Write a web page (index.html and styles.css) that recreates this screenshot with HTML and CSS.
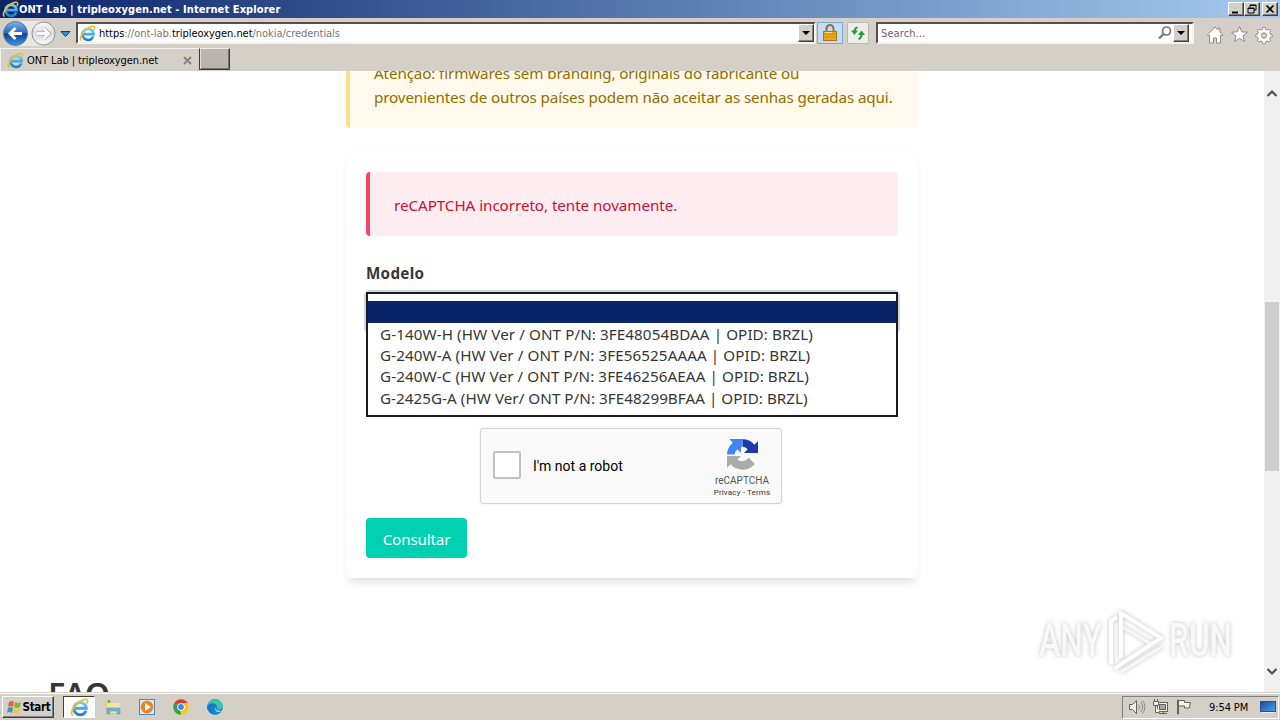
FILE: index.html
```html
<!DOCTYPE html>
<html lang="pt-BR">
<head>
<meta charset="utf-8">
<title>ONT Lab | tripleoxygen.net</title>
<link rel="stylesheet" href="styles.css">
</head>
<body>
<svg class="defs" width="0" height="0">
  <defs>
    <linearGradient id="ieblue" x1="0" y1="0" x2="0" y2="1"><stop offset="0" stop-color="#6fd0fa"/><stop offset="1" stop-color="#1583d0"/></linearGradient>
    <linearGradient id="back" x1="0" y1="0" x2="0" y2="1"><stop offset="0" stop-color="#7fb2e8"/><stop offset=".48" stop-color="#2a68bc"/><stop offset=".52" stop-color="#0c3f94"/><stop offset="1" stop-color="#3c9be8"/></linearGradient>
    <linearGradient id="fwd" x1="0" y1="0" x2="0" y2="1"><stop offset="0" stop-color="#fafafa"/><stop offset=".5" stop-color="#dcdde0"/><stop offset="1" stop-color="#f6f8fa"/></linearGradient>
    <linearGradient id="screen" x1="0" y1="0" x2="1" y2="1"><stop offset="0" stop-color="#184a9c"/><stop offset="1" stop-color="#4aa0f0"/></linearGradient>
    <symbol id="ie" viewBox="0 0 16 16">
      <path d="M13.400 10.700A5.200 5.200 0 1 1 13.700 8.600H4.600" fill="none" stroke="url(#ieblue)" stroke-width="2.500"/>
      <path d="M2.400 14.600C-.3 13.300 2.300 8 6.200 4.400 9.700 1.300 14.300 0 14.700 2.300 14.900 3 14.500 4 14.100 4.800" fill="none" stroke="#f3bd22" stroke-width="1.500"/>
    </symbol>
  </defs>
</svg>
<div class="desktop">
  <header class="titlebar">
    <svg class="ie16"><use href="#ie"/></svg>
    <span class="title">ONT Lab | tripleoxygen.net - Internet Explorer</span>
    <div class="winbtns">
      <span class="btn3d"><svg width="14" height="12"><path d="M3 9.500h6" stroke="#000" stroke-width="2"/></svg></span>
      <span class="btn3d"><svg width="14" height="12"><path d="M5 4.500V2h6v5H9M5 2.500h6M3 5h6v5H3zM3 5.500h6" fill="none" stroke="#000"/></svg></span>
      <span class="btn3d close"><svg width="14" height="12"><path d="M3.500 2.500l7 7M10.500 2.500l-7 7" stroke="#000" stroke-width="1.700"/></svg></span>
    </div>
  </header>

  <div class="toolbar">
    <svg class="nav" width="76" height="30">
      <path d="M16 3h27v25H16z" fill="#e9e8e5"/>
      <circle cx="43.500" cy="15.500" r="11.500" fill="url(#fwd)" stroke="#8d9196"/>
      <path d="M37 15.500h11M43.500 10.500l5 5-5 5" fill="none" stroke="#a9adb2" stroke-width="4.500"/>
      <path d="M37 15.500h11M43.500 10.500l5 5-5 5" fill="none" stroke="#fff" stroke-width="2.800"/>
      <circle cx="15.500" cy="15.500" r="12" fill="url(#back)" stroke="#547ba9"/>
      <path d="M22 15.500H10M15.500 10l-5.500 5.500 5.500 5.500" fill="none" stroke="#fff" stroke-width="3"/>
      <path d="M61 13.500h9l-4.500 5z" fill="#2a93dc" stroke="#143f76"/>
    </svg>
    <div class="address">
      <svg class="ie16"><use href="#ie"/></svg>
      <span class="url"><b>https</b>://ont-lab.<b>tripleoxygen.net</b>/nokia/credentials</span>
      <span class="drop btn3d"><i></i></span>
    </div>
    <span class="lock"><svg width="16" height="18"><path d="M4.500 9V4.500a3.500 3.500 0 0 1 7 0V9" fill="none" stroke="#8b7440" stroke-width="2"/><rect x="1.500" y="7.500" width="13" height="9" fill="#edaa20" stroke="#af7910"/><path d="M2 10h12M2 13h12" stroke="#c88a12"/><path d="M3 8.500h7" stroke="#ffe08a"/></svg></span>
    <span class="refresh"><svg width="16" height="16"><path d="M7.500 2.500Q4.500 3 4.500 7" fill="none" stroke="#289a36" stroke-width="2"/><path d="M1 5.500h7L4.500 10z" fill="#289a36"/><path d="M8.500 14Q11.500 13.500 11.500 9" fill="none" stroke="#289a36" stroke-width="2"/><path d="M8 10h7L11.500 5.500z" fill="#289a36"/></svg></span>
    <div class="search">
      <span>Search...</span>
      <svg width="16" height="16"><circle cx="9.500" cy="6" r="4" fill="#fff" stroke="#777" stroke-width="1.700"/><path d="M6.500 9L2 13.500" stroke="#777" stroke-width="2.400"/></svg>
      <span class="drop btn3d"><i></i></span>
    </div>
    <svg class="tools" width="70" height="22" fill="#fff" stroke="#8d8b88">
      <path d="M1.500 11L9 3l3 3V4h2v4l3 3-1 1-1.500-1V19H10.500v-5h-3v5H3.500v-8L2.500 12z"/>
      <path d="M33.500 2.500l2.200 5.300 5.800.4-4.500 3.700 1.500 5.600-5-3.100-5 3.100 1.500-5.600-4.500-3.700 5.800-.4z"/>
      <path d="M56.800 3.500h2.400l.5 2 1.500.6 1.800-1 1.700 1.700-1 1.800.6 1.500 2 .5v2l-2 .5-.6 1.500 1 1.800-1.700 1.700-1.800-1-1.500.6-.5 2h-2.400l-.5-2-1.500-.6-1.800 1-1.700-1.700 1-1.800-.6-1.500-2-.5v-2l2-.5.6-1.500-1-1.800L53 5.100l1.800 1 1.500-.6z"/><circle cx="58" cy="11.500" r="2.700" fill="#d4d0c8"/>
    </svg>
  </div>

  <div class="tabs">
    <div class="tab">
      <svg class="ie16"><use href="#ie"/></svg>
      <span class="tabtext">ONT Lab | tripleoxygen.net</span>
      <svg class="x" width="9" height="9"><path d="M1 1l7 7M8 1L1 8" stroke="#858079" stroke-width="1.900"/></svg>
    </div>
    <div class="newtab"></div>
  </div>

  <div class="viewport">
    <main class="page">
      <div class="column">
        <div class="message warn">
          <span>Atenção: firmwares sem branding, originais do fabricante ou</span><br>
          <span>provenientes de outros países podem não aceitar as senhas geradas aqui.</span>
        </div>
        <section class="card">
          <div class="message danger">reCAPTCHA incorreto, tente novamente.</div>
          <div class="label">Modelo</div>
          <div class="select">
            <div class="options">
              <div class="opt selected"></div>
              <div class="opt">G-140W-H (HW Ver / ONT P/N: 3FE48054BDAA | OPID: BRZL)</div>
              <div class="opt">G-240W-A (HW Ver / ONT P/N: 3FE56525AAAA | OPID: BRZL)</div>
              <div class="opt">G-240W-C (HW Ver / ONT P/N: 3FE46256AEAA | OPID: BRZL)</div>
              <div class="opt last">G-2425G-A (HW Ver/ ONT P/N: 3FE48299BFAA | OPID: BRZL)</div>
            </div>
          </div>
          <div class="captcha">
            <span class="check"></span>
            <span class="robot">I'm not a robot</span>
            <div class="brand">
              <svg width="31" height="31" viewBox="0 0 64 64">
                <path d="M64 32V4.500L56.400 12.100A32 32 0 0 0 32 0V16c5 0 8 2 10.500 5.500L35 29H64z" fill="#1c3aa9"/>
                <path d="M32 0H4.500l7.600 7.600A32 32 0 0 0 0 32H16c0-5 2-8 5.500-10.500L29 29V16h3z" fill="#4285f4"/>
                <path d="M0 32V59.500L7.600 51.900A32 32 0 0 0 57.500 51.500L44.500 38.500A16 16 0 0 1 21.500 42.500L29 35H0z" fill="#ababab"/>
              </svg>
              <span class="rc">reCAPTCHA</span>
              <span class="pt">Privacy - Terms</span>
            </div>
          </div>
          <div class="submit">Consultar</div>
        </section>
      </div>
      <h1 class="faq">FAQ</h1>
    </main>
    <div class="scroll">
      <svg width="16" height="14"><path d="M3.500 9L8 4.500l4.500 4.500" fill="none" stroke="#505050" stroke-width="2.200"/></svg>
      <div class="thumb"></div>
      <svg width="16" height="14"><path d="M3.500 5L8 9.500 12.500 5" fill="none" stroke="#505050" stroke-width="2.200"/></svg>
    </div>
    <svg class="watermark" width="210" height="76">
      <g class="wm">
        <text x="8" y="52" textLength="63" lengthAdjust="spacingAndGlyphs">ANY</text>
        <text x="138" y="52" textLength="63" lengthAdjust="spacingAndGlyphs">RUN</text>
        <path d="M80 60V17l6-4M90 54V9l40 25-40 26-6 5" fill="none" stroke="#fff" stroke-width="4"/>
        <path d="M90 22l33 20M90 68l42-26" fill="none" stroke="#f7f7f7" stroke-width="3"/>
      </g>
    </svg>
  </div>

  <footer class="taskbar">
    <div class="start btn3d">
      <svg width="17" height="17"><path d="M3 3q3-2 5 0L7 8Q4 6 2 8z" fill="#e7612e"/><path d="M9 3q3 2 6 0l-1 5q-3 2-6 0z" fill="#78b83e"/><path d="M2 9q2-2 5 0l-1 5q-3-2-5 0z" fill="#438dd5"/><path d="M8 9q3 2 6 0l-1 5q-3 2-6 0z" fill="#f4c537"/></svg>
      <span>Start</span>
    </div>
    <div class="task active"><svg class="ie18"><use href="#ie"/></svg></div>
    <div class="task"><svg width="18" height="18"><path d="M2 3h5l1 2h7v11H2z" fill="#e8c763"/><path d="M3 5h13v10H3z" fill="#f6e39c"/><path d="M3 16v-6h13v6h-3v-3H6v3z" fill="#68b7df" stroke="#4b9bc6" stroke-width=".5"/><path d="M4 2h2v3H4z" fill="#69ad50"/></svg></div>
    <div class="task"><svg width="18" height="18"><rect x="1.500" y="1.500" width="15" height="15" fill="#d5e8f7" stroke="#4a8cc6"/><circle cx="9" cy="9" r="6.300" fill="#f0831c"/><path d="M7 5l6 4-6 4z" fill="#fff"/></svg></div>
    <div class="task"><svg width="18" height="18"><circle cx="9" cy="9" r="7.800" fill="#f9c81d"/><path d="M9 9L2.300 5.100A7.800 7.800 0 0 1 15.700 5.100H9z" fill="#e33b2e"/><path d="M2.300 5.100L9 9v7.800A7.800 7.800 0 0 1 2.300 5.100z" fill="#2ba24c"/><path d="M12.500 11L9 16.800 8 12z" fill="#f9c81d"/><circle cx="9" cy="9" r="3.800" fill="#fff"/><circle cx="9" cy="9" r="2.900" fill="#4285f4"/></svg></div>
    <div class="task"><svg width="18" height="18"><circle cx="9" cy="9" r="7.900" fill="#1687d2"/><path d="M1.500 8A7.700 7.700 0 0 1 16.800 8c0 4-5 4-6 2.500 2-4-5-7-9.300-2.500z" fill="#38c7ac"/><path d="M1.300 8C5 3.500 10 5 10.500 8 6.500 7 5 11 8 16 4 15.500.8 12 1.300 8z" fill="#1677c5"/><path d="M10.500 8.500c-2 2-1 5 5.500 4q-3 2.500-6 .5-2-2 .5-4.500z" fill="#d4d0c8"/></svg></div>
    <div class="tray">
      <svg width="70" height="18" fill="#f2f0ea" stroke="#66635e">
        <path d="M1.500 6.500h3l4-4v13l-4-4h-3z"/><path d="M10.500 6.500q2 2.500 0 5M12.500 4q4.500 5 0 10M14.500 2.500q5 6.500 0 13" fill="none" stroke="#8d8a85"/>
        <rect x="29.500" y="4.500" width="10" height="9"/><rect x="31.500" y="6.500" width="6" height="5" fill="#a9a69f"/><path d="M31 15.500h8M35.500 13v2M25.500 3.500h5v4h-5zM27.500 7.500v7h4M26.500 1v3M29.500 1v3"/>
        <path d="M49.500 2v14h1V2zM50.500 2.500h6v2h6q-1 3-1 5.500h-5V8h-6z"/>
      </svg>
      <span class="clock">9:54 PM</span>
      <svg width="16" height="14"><rect x=".5" y="1.500" width="15" height="10" fill="url(#screen)" stroke="#29518b"/><path d="M2 12.500h12" stroke="#eef"/></svg>
    </div>
  </footer>
</div>
</body>
</html>
```

FILE: styles.css
```css
* { box-sizing: border-box; }
body { margin: 0; overflow: hidden; background: #fff; }
svg { display: block; flex: none; }
.defs { position: absolute; }
.desktop { width: 1280px; height: 720px; display: flex; flex-direction: column; overflow: hidden; font: 11px "DejaVu Sans Condensed", "DejaVu Sans", sans-serif; color: #000; white-space: nowrap; }
.ie16 { width: 17px; height: 17px; }
.ie18 { width: 19px; height: 19px; }
.btn3d { display: flex; align-items: center; justify-content: center; background: #d4d0c8; border: 1px solid; border-color: #fff #404040 #404040 #fff; box-shadow: inset -1px -1px #808080; }

.titlebar { height: 18px; flex: none; display: flex; align-items: center; padding: 0 2px; background: linear-gradient(90deg, #0a246a, #a6caf0); }
.title { color: #fff; font-weight: bold; font-size: 11px; margin-left: 0; letter-spacing: .09px; }
.winbtns { display: flex; margin-left: auto; }
.winbtns .btn3d { width: 16px; height: 14px; }
.winbtns .close { margin-left: 2px; }

.toolbar { height: 30px; flex: none; display: flex; align-items: center; background: #d4d0c8; }
.address, .search { height: 22px; display: flex; align-items: center; background: #fff; border: 2px solid; border-color: #55504b #f5f3ee #f5f3ee #55504b; }
.address { width: 740px; padding: 0 0 0 1px; }
.url { margin: 1px 0 0 3px; color: #777; letter-spacing: -.04px; }
.url b { font-weight: normal; color: #000; }
.drop { width: 16px; height: 18px; margin-left: auto; }
.drop i { border: 4px solid transparent; border-top-color: #000; border-bottom: 0; }
.lock { width: 26px; height: 22px; margin-left: 1px; display: flex; align-items: center; justify-content: center; background: #c4daf5; border: 1px solid #78aae6; }
.refresh { width: 22px; height: 22px; margin-left: 4px; display: flex; align-items: center; justify-content: center; background: #efedeb; border: 1px solid #bab6b0; border-radius: 2px; }
.search { width: 318px; margin-left: 7px; padding: 0 3px 0 3px; color: #666; }
.search > span:first-child { margin-top: 1px; letter-spacing: .1px; }
.search svg { margin-left: auto; }
.search .drop { margin-left: 0; }
.tools { margin: 3px 0 0 12px; }

.tabs { height: 23px; flex: none; display: flex; background: #d4d0c8; }
.tab { width: 199px; display: flex; align-items: center; padding: 0 7px 0 6px; border-top: 1px solid #f4f2ee; border-left: 1px solid #f4f2ee; }
.tabtext { margin-left: 3px; letter-spacing: -.08px; }
.x { margin-left: auto; }
.newtab { width: 31px; height: 22px; background: #bab3ae; border: 1px solid #3d3936; border-top-color: #eee; box-shadow: inset 1px 0 #ddd, inset -1px -1px #77716b; }

.viewport { position: relative; flex: 1; min-height: 0; display: flex; overflow: hidden; background: #fff; }
.page { flex: 1; height: 621px; overflow: hidden; font: 15.200px/24px "Noto Sans", "Open Sans", sans-serif; color: #363636; }
.column { width: 572px; margin-left: 346px; }
.message { border-left: 4px solid; border-radius: 4px; padding: 20px 24px; }
.warn { height: 92px; margin-top: -35px; padding-top: 25px; background: #fffaeb; border-color: #ffe08a; color: #946c00; letter-spacing: -.12px; }
.card { height: 426px; margin-top: 24px; padding: 20px; border-radius: 6px; box-shadow: 0 8px 10px -4px rgba(10,10,10,.13), 0 0 0 1px rgba(10,10,10,.015); }
.danger { height: 64px; padding-top: 21px; background: #feecf0; border-color: #f14668; color: #cc0f35; letter-spacing: -.05px; }
.label { margin-top: 25px; height: 24px; font-weight: bold; letter-spacing: .3px; }
.select { position: relative; height: 40px; margin-top: 7px; border-radius: 4px; box-shadow: 0 0 0 2px #d2d5e3; }
.options { position: absolute; inset: 0 0 auto; height: 125px; padding-top: 7px; background: #fff; border: 2px solid #1b1b1f; }
.opt { height: 21px; line-height: 22px; padding-left: 12px; letter-spacing: .09px; }
.last { line-height: 24px; letter-spacing: .05px; }
.selected { height: 22px; background: #0a246a; }
.captcha { width: 302px; height: 76px; margin: 96px 0 0 114px; padding-left: 12px; display: flex; align-items: center; background: #f9f9f9; border: 1px solid #d3d3d3; border-radius: 3px; box-shadow: 0 0 3px rgba(0,0,0,.08); font-family: Roboto, sans-serif; }
.check { width: 28px; height: 28px; background: #fff; border: 2px solid #c1c1c1; border-radius: 2px; margin-top: -2px; }
.robot { margin-left: 12px; font-size: 14px; color: #000; }
.brand { width: 60px; margin: 5px 9px 0 auto; display: flex; flex-direction: column; align-items: center; color: #555; }
.rc { font-size: 10px; line-height: 12px; margin-top: 5px; }
.pt { font-size: 8px; line-height: 11px; color: #333; letter-spacing: .15px; }
.submit { width: 101px; height: 40px; margin-top: 14px; background: #00d1b2; border-radius: 4px; color: #fff; text-align: center; line-height: 43px; letter-spacing: -.15px; }
.faq { margin: 98px 0 0 48px; font: 600 32px/36px "Noto Sans", sans-serif; color: #363636; letter-spacing: -.3px; }
.scroll { width: 16px; background: #f0f0f0; display: flex; flex-direction: column; padding: 16px 0 14px; }
.thumb { height: 169px; margin: 201px 1px auto 1px; background: #cdcdcd; }
.watermark { position: absolute; left: 1031px; top: 533px; }
.wm { filter: drop-shadow(0 0 2px rgba(0,0,0,.25)); }
.wm text { font: 500 46px Roboto, sans-serif; fill: #f8f8f8; }

.taskbar { height: 28px; flex: none; display: flex; align-items: center; padding: 1px 0 0 2px; background: #d4d0c8; border-top: 1px solid #d4d0c8; box-shadow: inset 0 1px #fff; }
.start { width: 52px; height: 22px; font-weight: bold; font-size: 11.500px; margin-right: 9px; letter-spacing: -.3px; }
.task { width: 34px; height: 22px; display: flex; align-items: center; justify-content: center; }
.task.active { width: 32px; background: #fff; border: 1px solid; border-color: #404040 #fff #fff #404040; margin-right: 1px; }
.tray { width: 157px; height: 23px; display: flex; align-items: center; margin: 0 1px 0 auto; padding: 0 2px 0 5px; border: 1px solid; border-color: #808080 #fff #fff #808080; }
.clock { margin-left: 11px; letter-spacing: -.1px; }
.tray svg:last-child { margin-left: auto; }
```
